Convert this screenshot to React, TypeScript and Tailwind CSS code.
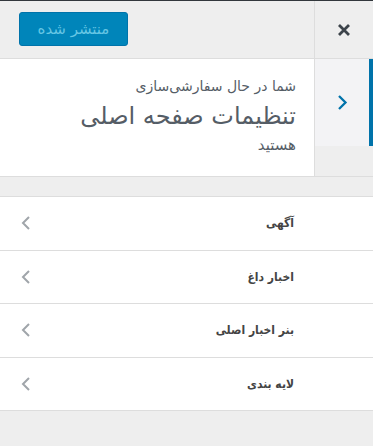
const sections = ['آگهی', 'اخبار داغ', 'بنر اخبار اصلی', 'لایه بندی'];

const App = () => {
  return (
    <div
      dir="rtl"
      className="w-[373px] h-[446px] bg-[#eeeeee] border-t border-[#32373c] overflow-hidden"
      style={{ fontFamily: '"DejaVu Sans", "Liberation Sans", sans-serif' }}
    >
      {/* header */}
      <div className="flex h-[58px] border-b border-[#dddddd]">
        <button className="w-[59px] h-full border-l border-[#dddddd] flex items-center justify-center">
          <svg width="14" height="14" viewBox="0 0 14 14">
            <path d="M2 2 L12 12 M12 2 L2 12" stroke="#3c434a" strokeWidth="2.8" />
          </svg>
        </button>
        <div className="flex-1 flex items-start justify-end pl-[19px] pt-[11px]">
          <button className="w-[109px] h-[34px] rounded-[3px] bg-[#0085ba] border border-[#0073aa] text-[#66c6e4] text-[15px] leading-none">
            منتشر شده
          </button>
        </div>
      </div>

      {/* panel info */}
      <div className="flex h-[118px] border-b border-[#dddddd]">
        <div className="w-[59px] border-l border-[#dddddd] bg-[#eeeeee]">
          <button className="w-full h-[87px] bg-[#f3f3f5] border-r-4 border-[#0073aa] flex items-center justify-center">
            <svg width="11" height="17" viewBox="0 0 11 17">
              <path d="M2 2 L8.5 8.5 L2 15" fill="none" stroke="#0073aa" strokeWidth="2.3" />
            </svg>
          </button>
        </div>
        <div className="flex-1 bg-white pr-[18px] pt-[16px] text-[#555d66]">
          <div className="text-[14px] leading-[22px]">شما در حال سفارشی‌سازی</div>
          <div className="text-[24px] leading-[34px] mt-[2px]">تنظیمات صفحه اصلی</div>
          <div className="text-[15px] leading-[22px] mt-[1px]">هستید</div>
        </div>
      </div>

      {/* sections */}
      <div className="mt-[19px] border-b border-[#dddddd]">
        {sections.map((s) => (
          <div
            key={s}
            className="flex items-center justify-between h-[53.5px] bg-white border-t border-[#dddddd] pr-[79px] pl-[21px]"
          >
            <span
              className="text-[12px] font-bold text-[#444444]"
              style={{ fontFamily: '"DejaVu Sans Condensed", "DejaVu Sans", sans-serif' }}
            >
              {s}
            </span>
            <svg width="10" height="16" viewBox="0 0 10 16">
              <path d="M8 2 L2 8 L8 14" fill="none" stroke="#a0a5aa" strokeWidth="2" />
            </svg>
          </div>
        ))}
      </div>
    </div>
  );
};

export default App;
